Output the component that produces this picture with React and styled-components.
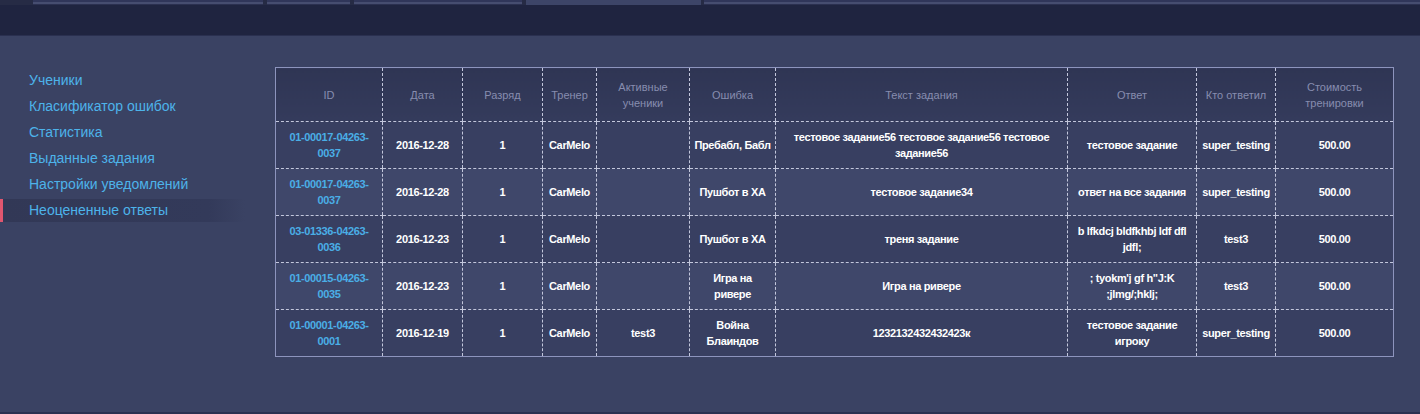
import React from 'react';
import styled, { createGlobalStyle } from 'styled-components';

const GlobalStyle = createGlobalStyle`
  html, body {
    margin: 0;
    padding: 0;
    background: #3a4263;
  }
  body {
    font-family: "Liberation Sans", Arial, sans-serif;
  }
`;

const columns = [
  { title: 'ID', width: 107 },
  { title: 'Дата', width: 80 },
  { title: 'Разряд', width: 80 },
  { title: 'Тренер', width: 54 },
  { title: 'Активные ученики', width: 93 },
  { title: 'Ошибка', width: 86 },
  { title: 'Текст задания', width: 292 },
  { title: 'Ответ', width: 129 },
  { title: 'Кто ответил', width: 79 },
  { title: 'Стоимость тренировки', width: 118 },
];

const rows = [
  ['01-00017-04263-0037', '2016-12-28', '1', 'CarMelo', '', 'Пребабл, Бабл', 'тестовое задание56 тестовое задание56 тестовое задание56', 'тестовое задание', 'super_testing', '500.00'],
  ['01-00017-04263-0037', '2016-12-28', '1', 'CarMelo', '', 'Пушбот в ХА', 'тестовое задание34', 'ответ на все задания', 'super_testing', '500.00'],
  ['03-01336-04263-0036', '2016-12-23', '1', 'CarMelo', '', 'Пушбот в ХА', 'треня задание', 'b lfkdcj bldfkhbj ldf dfl jdfl;', 'test3', '500.00'],
  ['01-00015-04263-0035', '2016-12-23', '1', 'CarMelo', '', 'Игра на ривере', 'Игра на ривере', '; tyokm\'j gf h"J:K ;jlmg/;hklj;', 'test3', '500.00'],
  ['01-00001-04263-0001', '2016-12-19', '1', 'CarMelo', 'test3', 'Война Блаиндов', '1232132432432423к', 'тестовое задание игроку', 'super_testing', '500.00'],
];

const menu = [
  'Ученики',
  'Класификатор ошибок',
  'Статистика',
  'Выданные задания',
  'Настройки уведомлений',
  'Неоцененные ответы',
];

const tabs = [
  { width: 33, dark: true },
  { width: 230 },
  { width: 4, dark: true },
  { width: 83 },
  { width: 4, dark: true },
  { width: 168 },
  { width: 4, dark: true },
  { width: 175, active: true },
  { width: 3, dark: true },
];

export default function App() {
  return (
    <Page>
      <GlobalStyle />
      <TabStrip>
        {tabs.map((t, i) => (
          <Tab key={i} $width={t.width} $dark={t.dark} $active={t.active} />
        ))}
        <Tab $grow />
      </TabStrip>
      <Header />
      <Main>
        <Sidebar>
          {menu.map((item, i) => (
            <MenuItem key={item} $active={i === menu.length - 1}>
              {item}
            </MenuItem>
          ))}
        </Sidebar>
        <Table>
          <colgroup>
            {columns.map((c) => (
              <col key={c.title} style={{ width: c.width }} />
            ))}
          </colgroup>
          <thead>
            <tr>
              {columns.map((c) => (
                <HeadCell key={c.title}>{c.title}</HeadCell>
              ))}
            </tr>
          </thead>
          <tbody>
            {rows.map((r, i) => (
              <Row key={i} $alt={i % 2 === 1}>
                {r.map((v, j) => (
                  <Cell key={j} $link={j === 0}>
                    {v}
                  </Cell>
                ))}
              </Row>
            ))}
          </tbody>
        </Table>
      </Main>
      <Footer />
    </Page>
  );
}

const Page = styled.div`
  display: flex;
  flex-direction: column;
  height: 414px;
  background: #3a4263;
  overflow: hidden;
`;

const TabStrip = styled.div`
  display: flex;
  height: 5px;
  background: #262b45;
`;

const Tab = styled.div`
  width: ${(p) => (p.$width ? `${p.$width}px` : 'auto')};
  flex: ${(p) => (p.$grow ? '1' : 'none')};
  background: ${(p) =>
    p.$dark
      ? '#262b45'
      : p.$active
      ? '#3d4568'
      : 'linear-gradient(#30365a 0, #30365a 2px, #464d70 2px, #464d70 4px, #2b3050 4px)'};
`;

const Header = styled.div`
  height: 30px;
  background: #1f2440;
  border-bottom: 1px solid #2a3050;
`;

const Main = styled.div`
  flex: 1;
  display: flex;
  align-items: flex-start;
  padding-top: 31px;
  gap: 30px;
`;

const Sidebar = styled.nav`
  width: 245px;
  padding-top: 2px;
  display: flex;
  flex-direction: column;
  gap: 3px;
`;

const MenuItem = styled.a`
  display: block;
  height: 23px;
  line-height: 23px;
  font-size: 14px;
  color: #4db3ea;
  cursor: pointer;
  box-sizing: border-box;
  border-left: 3px solid ${(p) => (p.$active ? '#e0566f' : 'transparent')};
  padding-left: 26px;
  background: ${(p) =>
    p.$active ? 'linear-gradient(90deg, #323856 0%, #333a5a 85%, #3a4263 100%)' : 'transparent'};
`;

const Table = styled.table`
  table-layout: fixed;
  width: 1118px;
  border-collapse: collapse;
  border: 1px solid #8d94bd;
`;

const HeadCell = styled.th`
  height: 53px;
  padding: 0 6px;
  font-size: 11px;
  line-height: 16px;
  font-weight: normal;
  color: #878daf;
  background: linear-gradient(#2f3554, #343b5c);
  text-align: center;
  border-left: 1px dashed #c3c7dc;
  border-bottom: 1px dashed #c3c7dc;
  &:first-child {
    border-left: 1px solid #8d94bd;
  }
`;

const Row = styled.tr`
  background: ${(p) => (p.$alt ? '#3f476a' : '#383f61')};
  &:last-child td {
    border-bottom: 1px solid #8d94bd;
  }
`;

const Cell = styled.td`
  height: 46px;
  padding: 0 4px;
  font-size: 11px;
  line-height: 16px;
  font-weight: bold;
  letter-spacing: -0.35px;
  text-align: center;
  color: ${(p) => (p.$link ? '#4aaee6' : '#ffffff')};
  border-left: 1px dashed #c3c7dc;
  border-bottom: 1px dashed #c3c7dc;
  &:first-child {
    border-left: 1px solid #8d94bd;
  }
`;

const Footer = styled.div`
  height: 2px;
  background: #2a3050;
`;
